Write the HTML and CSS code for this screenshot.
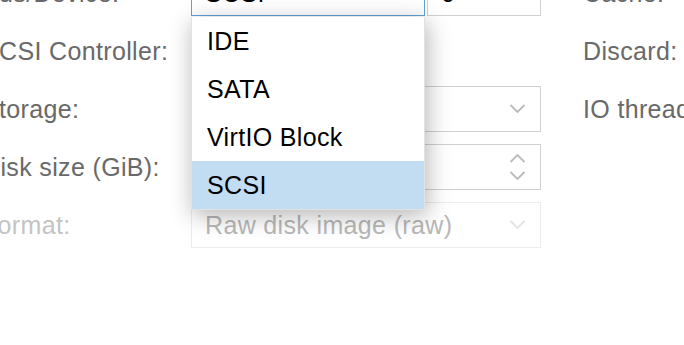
FILE: index.html
```html
<!DOCTYPE html>
<html lang="en">
<head>
    <meta charset="UTF-8">
    <title>Hard Disk</title>
    <link rel="stylesheet" href="styles.css">
</head>
<body>
    <div class="panel">
        <div class="column left-column">
            <div class="row">
                <label>Bus/Device:</label>
                <div class="field-pair">
                    <div class="field combo focused">
                        <span class="value">SCSI</span>
                        <svg class="trigger" viewBox="0 0 16 10"><polyline points="1,1 8,8 15,1"/></svg>
                    </div>
                    <div class="field number">
                        <span class="value">0</span>
                        <svg class="trigger" viewBox="0 0 16 10"><polyline points="1,1 8,8 15,1"/></svg>
                    </div>
                </div>
            </div>
            <div class="row">
                <label>SCSI Controller:</label>
                <div class="display"></div>
            </div>
            <div class="row">
                <label>Storage:</label>
                <div class="field combo">
                    <span class="value"></span>
                    <svg class="trigger" viewBox="0 0 16 10"><polyline points="1,1 8,8 15,1"/></svg>
                </div>
            </div>
            <div class="row">
                <label>Disk size (GiB):</label>
                <div class="field spinner">
                    <span class="value"></span>
                    <div class="spin-arrows">
                        <svg viewBox="0 0 16 10"><polyline points="1,9 8,2 15,9"/></svg>
                        <svg viewBox="0 0 16 10"><polyline points="1,1 8,8 15,1"/></svg>
                    </div>
                </div>
            </div>
            <div class="row disabled">
                <label>Format:</label>
                <div class="field combo">
                    <span class="value">Raw disk image (raw)</span>
                    <svg class="trigger" viewBox="0 0 16 10"><polyline points="1,1 8,8 15,1"/></svg>
                </div>
            </div>
        </div>

        <div class="column right-column">
            <div class="row"><label>Cache:</label></div>
            <div class="row"><label>Discard:</label></div>
            <div class="row"><label>IO thread:</label></div>
        </div>
    </div>

    <!-- open bus list -->
    <ul class="picker">
        <li>IDE</li>
        <li>SATA</li>
        <li>VirtIO Block</li>
        <li class="selected">SCSI</li>
    </ul>
</body>
</html>
```

FILE: styles.css
```css
body {
    margin: 0;
    padding: 0;
    background-color: #fff;
    font-family: "Liberation Sans", Arial, sans-serif;
    font-size: 25px;
    letter-spacing: 0.35px;
    color: #000;
    overflow: hidden;
}

.panel {
    display: flex;
    gap: 42px;
    margin-top: -30px;
    margin-left: -18px;
}

.column {
    display: flex;
    flex-direction: column;
    gap: 12px;
}

.row {
    display: flex;
    align-items: center;
    height: 46px;
}

.row label {
    width: 209px;
    flex-shrink: 0;
    color: #696969;
    white-space: nowrap;
}

.right-column .row label {
    width: auto;
}

.field-pair {
    display: flex;
    gap: 2px;
    width: 350px;
}

.field {
    box-sizing: border-box;
    display: flex;
    align-items: center;
    justify-content: space-between;
    width: 350px;
    height: 46px;
    padding: 0 14px 0 13px;
    border: 1px solid #d0d0d0;
    background-color: #fff;
}

.field-pair .combo {
    width: 234px;
}

.field-pair .number {
    width: 114px;
}

.focused {
    border-color: #5fa2dd;
}

.trigger {
    width: 17px;
    height: 10px;
}

.field svg polyline {
    fill: none;
    stroke: #bababa;
    stroke-width: 1.8;
}

.spin-arrows {
    display: flex;
    flex-direction: column;
    gap: 8px;
}

.spin-arrows svg {
    width: 17px;
    height: 10px;
}

.display {
    padding-left: 10px;
}

.disabled label {
    color: #c4c4c4;
}

.disabled .field {
    border-color: #ececec;
}

.disabled .value {
    color: #b8b8b8;
}

.disabled .field svg polyline {
    stroke: #e4e4e4;
}

/* dropdown list over the form */
.picker {
    position: absolute;
    top: 17px;
    left: 191px;
    width: 234px;
    margin: 0;
    padding: 0;
    list-style: none;
    background-color: #fff;
    box-sizing: border-box;
    border: 1px solid #e2e2e2;
    border-top: none;
    box-shadow: 2px 5px 22px rgba(0, 0, 0, 0.3);
}

.picker li {
    height: 48px;
    line-height: 48px;
    padding-left: 15px;
}

.picker .selected {
    background-color: #c2dcf1;
}
```
